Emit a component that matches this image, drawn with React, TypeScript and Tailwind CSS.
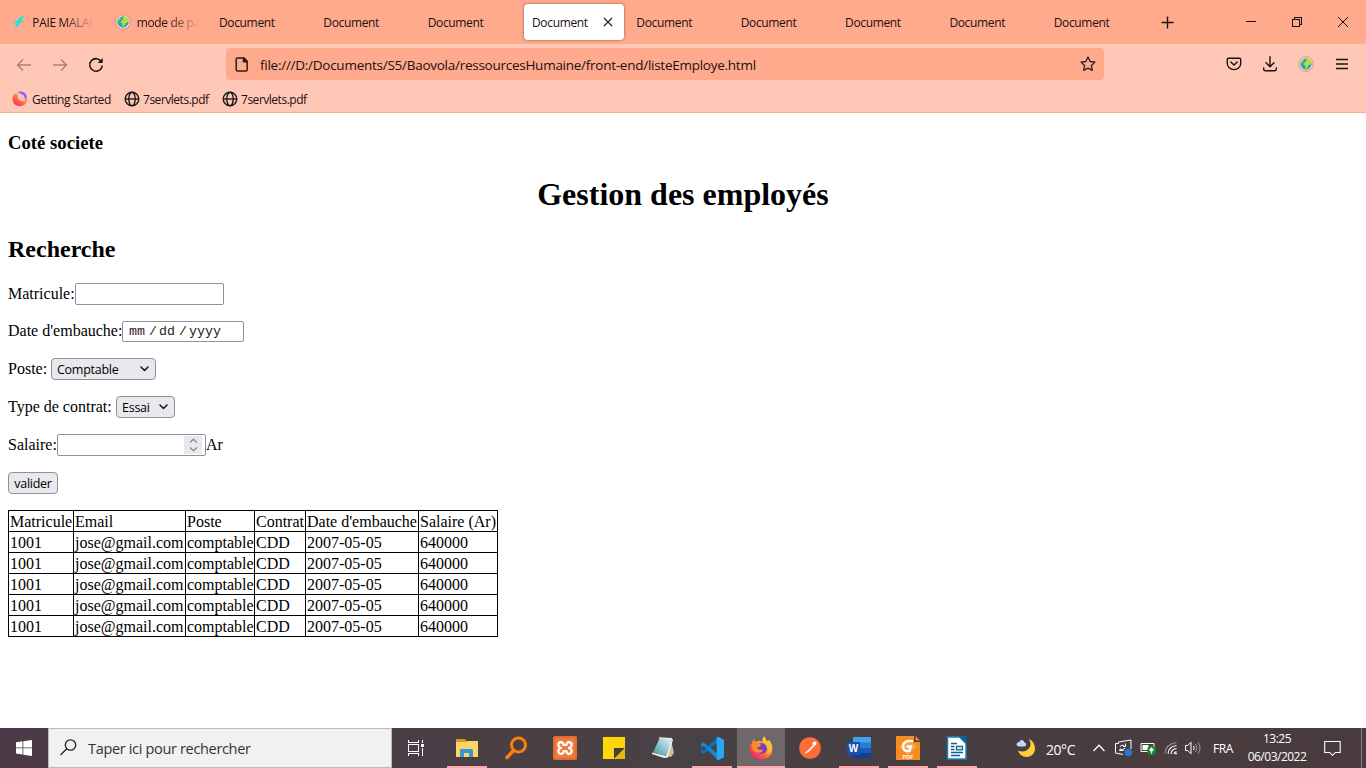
import type { ReactNode } from "react";

const Globe = ({ size = 16 }: { size?: number }) => (
  <svg width={size} height={size} viewBox="0 0 16 16" className="shrink-0">
    <circle cx="8" cy="8" r="7.2" fill="#e9f3ee" stroke="#ff7d59" strokeWidth="1" />
    <circle cx="8" cy="8" r="5.7" fill="#2ba8b8" />
    <path d="M8 3l2.500.2 2 1.600.7 2.600-1.500 1.500-1.700.3-.8 3-1.500.2-.4-2.800-1.500-1.400.6-1.600 1.700-.7z" fill="#c7d92d" />
    <path d="M3 6.500l1.600-2.700 1.600-.5-.8 2L4 7.500z" fill="#8fcf4a" />
  </svg>
);

const Bolt = () => (
  <svg width="16" height="16" viewBox="0 0 16 16" className="shrink-0">
    <path d="M15 .5L9 4.200 6.400 7.500 2 8.300l4.500 1.300L4.500 14.800l5-4.600 2-1.800 3.500-.6-3.800-.8z" fill="#20e3dc" />
  </svg>
);

const WebIcon = () => (
  <svg width="16" height="16" viewBox="0 0 16 16" fill="none" stroke="#1d1a1a" strokeWidth="1.4" className="shrink-0">
    <circle cx="8" cy="8" r="6.8" />
    <ellipse cx="8" cy="8" rx="3.2" ry="6.8" />
    <path d="M1.2 8h13.6" />
  </svg>
);

const FirefoxMark = () => (
  <svg width="16" height="16" viewBox="0 0 16 16" className="shrink-0">
    <defs>
      <linearGradient id="ffm" x1=".9" y1="0" x2=".1" y2="1">
        <stop offset="0" stopColor="#ffd02e" />
        <stop offset=".5" stopColor="#ff7a3c" />
        <stop offset="1" stopColor="#f5157a" />
      </linearGradient>
    </defs>
    <path d="M3 2.200C-.2 5-.1 10 2.200 12.700 5 16 10.500 15.900 13.300 13c2.100-2.200 2.200-4.500 1.600-6.500-1 2.600-3 3.800-5.400 3.500C6.500 9.500 5.800 7.500 6 5.500L5.500 3z" fill="url(#ffm)" />
    <path d="M5 1.300c4.500-2.200 9.600.5 9.900 5-.5 1.500-1.200 2.200-2 2.600C13.300 5.500 10.500 2.800 5 1.300z" fill="#9059ff" />
    <circle cx="9.500" cy="6.200" r="2.700" fill="#ffc0ae" />
  </svg>
);

const tabs: { text: string; icon?: ReactNode; active?: boolean }[] = [
  { text: "PAIE MALAG", icon: <Bolt /> },
  { text: "mode de pai", icon: <Globe /> },
  { text: "Document" },
  { text: "Document" },
  { text: "Document" },
  { text: "Document", active: true },
  { text: "Document" },
  { text: "Document" },
  { text: "Document" },
  { text: "Document" },
  { text: "Document" },
];

const Tab = ({ text, icon, active }: { text: string; icon?: ReactNode; active?: boolean }) => (
  <div className="flex h-11 w-[104.35px] shrink-0 items-center pr-[4.35px]">
    <div className={active ? "flex h-9 w-[100px] items-center rounded-[4px] bg-white pl-2 shadow-[0_0_3px_rgba(80,20,0,0.6)]" : "flex h-9 w-[100px] items-center overflow-hidden pl-2"}>
      {icon}
      {icon ? (
        <span className="mt-0.5 ml-1.5 w-[62px] overflow-hidden whitespace-nowrap [mask-image:linear-gradient(to_right,black_50%,transparent)]">{text}</span>
      ) : (
        <span className="mt-0.5">{text}</span>
      )}
      {active && (
        <svg width="10" height="10" viewBox="0 0 10 10" stroke="#222" strokeWidth="1.1" className="ml-[15px]">
          <path d="M1 1l8 8M9 1L1 9" />
        </svg>
      )}
    </div>
  </div>
);

const Browser = () => (
  <header className="h-[113px] border-b border-[#ffaa8d] bg-[#ffc8b6] font-['Open_Sans','Noto_Sans',sans-serif] text-[12px] tracking-[-0.35px] text-[#1b1013]">
    <div className="flex h-11 bg-[#ffaa8d] pl-[2.300px]">
      {tabs.map((t, i) => <Tab key={i} {...t} />)}
      <svg width="13" height="13" viewBox="0 0 13 13" stroke="#1b1013" strokeWidth="1.4" className="mt-4 ml-[11px] shrink-0">
        <path d="M6.500 .5v12M.5 6.500h12" />
      </svg>
      <div className="ml-auto flex items-center">
        <svg width="10" height="10" viewBox="0 0 10 10" stroke="#111" fill="none" shapeRendering="crispEdges"><path d="M0 4.500h10" /></svg>
        <svg width="10" height="10" viewBox="0 0 10 10" stroke="#111" fill="none" className="ml-9" shapeRendering="crispEdges">
          <path d="M.5 2.500h7v7h-7zM2.500 2.500v-2h7v7h-2" />
        </svg>
        <svg width="10" height="10" viewBox="0 0 10 10" stroke="#111" fill="none" className="mr-[18px] ml-9"><path d="M0 0l10 10M10 0L0 10" /></svg>
      </div>
    </div>
    <div className="flex h-[42px] items-center">
      <svg width="16" height="16" viewBox="0 0 16 16" fill="none" stroke="#a98176" strokeWidth="1.300" className="ml-4"><path d="M15 8H1.500M7 2.500L1.500 8 7 13.500" /></svg>
      <svg width="16" height="16" viewBox="0 0 16 16" fill="none" stroke="#a98176" strokeWidth="1.300" className="ml-5"><path d="M1 8h13.500M9 2.500L14.500 8 9 13.500" /></svg>
      <svg width="16" height="16" viewBox="0 0 16 16" fill="none" stroke="#1b1013" strokeWidth="1.500" className="ml-5"><path d="M13.600 5A6.300 6.300 0 1 0 14.300 8.500" /><path d="M14.700 1v5h-5z" fill="#1b1013" stroke="none" /></svg>
      <div className="ml-[122px] flex h-8 w-[878px] items-center rounded-[4px] bg-[#ffaa8d] -mt-0.5">
        <svg width="14" height="15" viewBox="0 0 14 15" fill="none" stroke="#2b1d1a" strokeWidth="1.500" strokeLinejoin="round" className="ml-[9px]">
          <path d="M2.500 1h6.500l3.200 3.300v8.400q0 1.300-1.300 1.300H2.500q-1.300 0-1.300-1.300V2.300Q1.200 1 2.500 1z" /><path d="M8.500 1v3.800h3.600z" fill="#2b1d1a" />
        </svg>
        <span className="mt-0.5 ml-[11px] w-[497px] text-[13.500px] tracking-[-0.26px] whitespace-nowrap">file:///D:/Documents/S5/Baovola/ressourcesHumaine/front-end/listeEmploye.html</span>
        <svg width="16" height="16" viewBox="0 0 16 16" fill="none" stroke="#2b1d1a" strokeWidth="1.300" strokeLinejoin="round" className="mr-2 ml-auto">
          <path d="M8 1l2.100 4.500 4.900.6-3.600 3.400.9 4.900L8 12.100l-4.300 2.300.9-4.900L1 6.100l4.900-.6z" />
        </svg>
      </div>
      <svg width="16" height="16" viewBox="0 0 16 16" fill="none" stroke="#1b1013" strokeWidth="1.400" strokeLinecap="round" strokeLinejoin="round" className="ml-[122px] -mt-0.5">
        <path d="M2.500 2.200h11q1.200 0 1.200 1.200v4A6.700 6.200 0 0 1 1.300 7.400v-4q0-1.200 1.200-1.200zM4.800 6L8 9l3.200-3" />
      </svg>
      <svg width="16" height="16" viewBox="0 0 16 16" fill="none" stroke="#1b1013" strokeWidth="1.400" strokeLinecap="round" strokeLinejoin="round" className="ml-5 -mt-0.5">
        <path d="M8 .8v9.700M4 6.800l4 3.900 4-3.900M1.700 12v1.300q0 1.400 1.400 1.400h9.800q1.400 0 1.400-1.400V12" />
      </svg>
      <span className="ml-5 -mt-0.5"><Globe /></span>
      <svg width="12" height="12" viewBox="0 0 12 12" stroke="#1b1013" strokeWidth="1.300" className="-mt-0.5 ml-[22px]"><path d="M0 1.500h12M0 6h12M0 10.500h12" /></svg>
    </div>
    <div className="flex h-[26px] items-center whitespace-nowrap">
      <span className="-mt-px ml-3"><FirefoxMark /></span>
      <span className="mt-px ml-1 w-[88px] tracking-[-0.4px]">Getting Started</span>
      <span className="ml-1"><WebIcon /></span>
      <span className="mt-px ml-[3px] w-[75px] tracking-[-0.48px]">7servlets.pdf</span>
      <span className="ml-1"><WebIcon /></span>
      <span className="mt-px ml-[3px] tracking-[-0.48px]">7servlets.pdf</span>
    </div>
  </header>
);

const Chevron = () => (
  <svg width="9" height="6" viewBox="0 0 9 6" fill="none" stroke="#15141a" strokeWidth="1.500" strokeLinecap="round" strokeLinejoin="round"><path d="M1 1l3.500 3.500L8 1" /></svg>
);

const boxText = "font-['Open_Sans','Noto_Sans',sans-serif] text-[12.500px] tracking-[-0.26px]";

const Row = ({ label, labelClass, children }: { label: string; labelClass: string; children: ReactNode }) => (
  <div className="mb-4 flex h-[22px] items-center whitespace-nowrap">
    <label className={labelClass}>{label}</label>
    {children}
  </div>
);

const head = ["Matricule", "Email", "Poste", "Contrat", "Date d'embauche", "Salaire (Ar)"];
const row = ["1001", "jose@gmail.com", "comptable", "CDD", "2007-05-05", "640000"];

const Page = () => (
  <main className="h-[615px] overflow-hidden bg-white px-2 font-['Liberation_Serif',serif] text-[16px] leading-[18px] text-black">
    <h3 className="mt-[19px] h-[21px] text-[18.720px] leading-[21px] font-bold">Coté societe</h3>
    <h1 className="mt-[23px] h-9 text-center text-[32px] leading-9 font-bold">Gestion des employés</h1>
    <h2 className="mt-[23px] h-7 text-[24px] leading-7 font-bold">Recherche</h2>
    <div className="mt-5">
      <Row label="Matricule:" labelClass="w-[67px]">
        <div className="h-[22px] w-[149px] rounded-[2px] border border-[#8f8f9d]" />
      </Row>
      <div className="-mb-px">
        <Row label="Date d'embauche:" labelClass="w-[114px] -mt-0.5">
          <div className="-mt-px flex h-[21px] w-[122px] items-center rounded-[2px] border border-[#8f8f9d] pl-1.5 font-['Liberation_Mono',monospace] text-[13.300px] text-[#222]">
            <span className="w-[20px]">mm</span><span className="w-[10px]">/</span><span className="w-[20px]">dd</span><span className="w-[10px]">/</span><span>yyyy</span>
          </div>
        </Row>
      </div>
      <Row label="Poste:" labelClass="w-[43px]">
        <div className={`flex h-[22px] w-[105px] items-center justify-between rounded-[4px] border border-[#8f8f9d] bg-[#e9e9ed] pr-1.5 pl-[5px] ${boxText}`}><span className="mt-0.5">Comptable</span><Chevron /></div>
      </Row>
      <Row label="Type de contrat:" labelClass="w-[108px]">
        <div className={`flex h-[22px] w-[59px] items-center justify-between rounded-[4px] border border-[#8f8f9d] bg-[#e9e9ed] pr-1.5 pl-[5px] ${boxText}`}><span className="mt-0.5">Essai</span><Chevron /></div>
      </Row>
      <Row label="Salaire:" labelClass="w-[49px]">
        <div className="flex h-[22px] w-[149px] items-center justify-end rounded-[2px] border border-[#8f8f9d] pr-[3px]">
          <div className="flex h-[18px] w-[18px] items-center justify-center bg-[#e9e9ed]">
            <svg width="9" height="14" viewBox="0 0 9 14" fill="none" stroke="#8f8f9d" strokeWidth="1.500"><path d="M1 4.500L4.500 1.300 8 4.500M1 9.500l3.500 3.200L8 9.500" /></svg>
          </div>
        </div>
        <span>Ar</span>
      </Row>
      <div className={`mb-4 flex h-[22px] w-[50px] items-center justify-center rounded-[4px] border border-[#8f8f9d] bg-[#e9e9ed] ${boxText}`}><span className="mt-0.5">valider</span></div>
    </div>
    <table className="w-[490px] table-fixed border-collapse">
      <colgroup>
        <col className="w-[65px]" /><col className="w-[112px]" /><col className="w-[69px]" /><col className="w-[51px]" /><col className="w-[113px]" /><col className="w-[79px]" />
      </colgroup>
      <tbody>
        {[head, row, row, row, row, row].map((cells, r) => (
          <tr key={r} className="h-[21px]">
            {cells.map((c) => <td key={c} className="border border-black px-px pt-[2px] pb-0 whitespace-nowrap">{c}</td>)}
          </tr>
        ))}
      </tbody>
    </table>
  </main>
);

const Explorer = () => (
  <svg width="24" height="24" viewBox="0 0 24 24">
    <path d="M1 3h9l1.500 2H22v3H1z" fill="#d89b16" /><path d="M1 6h10l1-1h11v16H1z" fill="#fbd667" />
    <path d="M5 21v-7q0-1 1-1h11q1 0 1 1v7h-4v-4h-5v4z" fill="#3a95dd" />
  </svg>
);
const Everything = () => (
  <svg width="24" height="24" viewBox="0 0 24 24" fill="none" stroke="#ff7f0e" strokeLinecap="round">
    <circle cx="14.500" cy="9" r="7" strokeWidth="3" /><path d="M9.500 14.500L3 21.500" strokeWidth="3.500" />
  </svg>
);
const Xampp = () => (
  <svg width="24" height="24" viewBox="0 0 24 24">
    <rect width="24" height="24" rx="2" fill="#ef7c3e" /><rect x="1" y="1" width="22" height="22" rx="1.500" fill="none" stroke="#d35d25" />
    <path d="M8 6.200q-3.200 0-2.600 3Q5.800 11 8 12q-3 1-2.600 3.200.2 2.800 2.800 2.600 2.300-.2 2.300-2.600h3q0 2.400 2.300 2.600 2.600.2 2.800-2.600Q19 13 16 12q2.200-1 2.600-2.800.6-3-2.600-3-2.200.1-2.400 2.600h-3.200Q10.200 6.300 8 6.200z" fill="none" stroke="#fff" strokeWidth="2.200" strokeLinejoin="round" />
  </svg>
);
const Sticky = () => (
  <svg width="24" height="24" viewBox="0 0 24 24"><path d="M1 1h22v22H1z" fill="#ffd60a" /><path d="M12 23V12h11z" fill="#463c3c" /><path d="M23 12v11H12z" fill="#e9b80c" /></svg>
);
const Notepad = () => (
  <svg width="24" height="24" viewBox="0 0 24 24">
    <defs><linearGradient id="np" x1="0" y1="1" x2="1" y2="0"><stop stopColor="#3e95a4" /><stop offset="1" stopColor="#dff5fa" /></linearGradient></defs>
    <path d="M20 4l3 13-3 4-5-1z" fill="#cbbf92" /><path d="M8.500 2.500L21 3l-4 17-15-3.500z" fill="url(#np)" /><path d="M1 16.500L15.500 20 21 3l1 .5-5 18-4 .5L1 18z" fill="#eef2f3" /><path d="M8 2l13 .8" stroke="#e2e7e9" strokeWidth="1.500" />
  </svg>
);
const VsCode = () => (
  <svg width="25" height="25" viewBox="0 0 24 24">
    <path d="M17 1L3.500 14 1 12.500V16l2.500 1L18 5.500z" fill="#0a73bc" /><path d="M17 23L3.500 9.500 1 11V7.500l2.500-1.500L18 18z" fill="#1586d1" /><path d="M17 .5l6 3v17l-6 3-1-1.500V2z" fill="#29a8f3" />
  </svg>
);
const Firefox = () => (
  <svg width="24" height="24" viewBox="0 0 24 24">
    <defs><linearGradient id="ff" x1="1" y1="0" x2=".2" y2="1"><stop stopColor="#fff44f" /><stop offset=".4" stopColor="#ffb02e" /><stop offset=".7" stopColor="#ff5b36" /><stop offset="1" stopColor="#ed1d83" /></linearGradient></defs>
    <path d="M3 6.500L4.500 3l2 2.700Q8.500 4.700 11 5l2.500 1Q12.500 3 15.500 0q.5 3.500 3 5.500L20 4q3.800 4.200 3.400 9.500Q22.500 23 12 23.500 2 23 .8 13.500.4 9.500 3 6.500z" fill="url(#ff)" />
    <circle cx="12.500" cy="12.500" r="5.400" fill="#7540c8" /><path d="M3 8q5-3 9 .7l-1 2H9.500q-2 1-1 2.300 3 1 5.500.5 0 3-4 3.200Q2.500 17 3 8z" fill="#ff8a2a" /><path d="M15 6q3 1.500 3.200 4Q21 14 17 18q4.500-1 5-5Q23 8 17 4z" fill="#ffbd31" />
  </svg>
);
const Postman = () => (
  <svg width="24" height="24" viewBox="0 0 24 24"><circle cx="12" cy="12" r="10.800" fill="#ff6c37" /><path d="M6.500 17.800l1.500-2 7-7 1.500 1.300-6.500 6.400z" fill="#fff" /><circle cx="16.500" cy="7.500" r="2" fill="#fff" /><path d="M8.500 15.500l6-6" stroke="#ff6c37" strokeWidth=".6" /></svg>
);
const Word = () => (
  <svg width="25" height="24" viewBox="0 0 25 24">
    <path d="M6 1h18v6H6z" fill="#41a5ee" /><path d="M6 6.500h18v5.500H6z" fill="#2b7cd3" /><path d="M6 12h18v5.500H6z" fill="#185abd" /><path d="M6 17h18v5.500H6z" fill="#103f91" /><rect y="6" width="13" height="13" rx="1" fill="#1851ad" />
    <text x="6.500" y="16" textAnchor="middle" fontFamily="Liberation Sans, sans-serif" fontSize="10" fontWeight="700" fill="#fff">W</text>
  </svg>
);
const Foxit = () => (
  <svg width="24" height="24" viewBox="0 0 24 24">
    <path d="M0 0h18v6h6v18H0z" fill="#f68b1f" /><path d="M19.500 0L24 4.500h-4.500z" fill="#f68b1f" /><path d="M12 3l9 8-9 8-9-8z" fill="#f9a34d" />
    <path d="M17 5.200q-9-1.500-10 4.800 0 6 6.500 4.800l1.500-4.300h-4.500" fill="none" stroke="#fff" strokeWidth="2.300" />
    <text x="12" y="22.500" textAnchor="middle" fontFamily="Liberation Sans, sans-serif" fontSize="5.500" fontWeight="700" fill="#fff">PDF</text>
  </svg>
);
const Writer = () => (
  <svg width="24" height="24" viewBox="0 0 24 24">
    <path d="M2.500 1h12L21 7.500V23H2.500z" fill="#fff" stroke="#1385bd" strokeWidth="1.500" /><path d="M14 0h7.500v7z" fill="#0d628e" />
    <path d="M6 7.500h6M6 10.500h3.500M6 13.500h3.500M6 16.500h12M6 19.500h9" stroke="#0d628e" strokeWidth="1.400" /><rect x="11.500" y="10.300" width="6" height="3.600" fill="#bfe3f5" stroke="#0d628e" strokeWidth="1.200" />
  </svg>
);

const apps: { icon: ReactNode; open?: boolean; active?: boolean }[] = [
  { icon: <Explorer />, open: true }, { icon: <Everything /> }, { icon: <Xampp /> }, { icon: <Sticky /> }, { icon: <Notepad /> },
  { icon: <VsCode />, open: true }, { icon: <Firefox />, open: true, active: true }, { icon: <Postman /> },
  { icon: <Word />, open: true }, { icon: <Foxit />, open: true }, { icon: <Writer />, open: true },
];

const Taskbar = () => (
  <footer className="flex h-10 bg-gradient-to-r from-[#4b3a45] via-[#484145] to-[#483a3d] font-['Open_Sans','Noto_Sans',sans-serif] text-white">
    <div className="flex w-12 items-center justify-center">
      <svg width="16" height="16" viewBox="0 0 16 16" fill="#fff"><path d="M0 2.200L6.500 1.300V7.500H0zM7.300 1.200L16 0v7.500H7.300zM0 8.300h6.500v6.200L0 13.600zM7.300 8.300H16V16l-8.700-1.200z" /></svg>
    </div>
    <div className="flex w-[344px] items-center border border-[#bcbcbc] bg-[#f1f1f1]">
      <svg width="17" height="17" viewBox="0 0 17 17" fill="none" stroke="#222" strokeWidth="1.300" className="-mt-0.5 ml-[11px]"><circle cx="10.500" cy="6" r="5.200" /><path d="M6.800 9.700L.5 16" /></svg>
      <span className="mt-0.5 ml-[11px] text-[14.500px] tracking-[-0.33px] text-[#333]">Taper ici pour rechercher</span>
    </div>
    <div className="flex w-[51px] items-center pl-4">
      <svg width="16" height="16" viewBox="0 0 16 16" fill="none" stroke="#fff" shapeRendering="crispEdges"><path d="M.5 0v2.500h10V0M.5 4.500h10v7H.5zM.5 16v-2.500h10V16M14.500 0v3M14.500 8v8" /><path d="M13 4h3v3h-3z" fill="#fff" stroke="none" /></svg>
    </div>
    {apps.map((a, i) => (
      <div key={i} className="flex w-[49px] justify-center pr-px">
        <div className={a.active ? "flex h-10 w-12 shrink-0 flex-col items-center bg-[#6e686b]" : "flex h-10 w-12 shrink-0 flex-col items-center"}>
          <div className="flex h-[38px] items-center pt-0.5">{a.icon}</div>
          {a.open && <div className={a.active ? "h-0.5 w-12 bg-[#ffa7af]" : "h-0.5 w-10 bg-[#ffa7af]"} />}
        </div>
      </div>
    ))}
    <div className="ml-[34px] flex items-center">
      <svg width="20" height="20" viewBox="0 0 20 20"><path d="M13 1q4 8-2.500 11.500Q6.500 14.500 2 12.500 4 19 10.500 19q7-.5 8.500-7Q19.500 4 13 1z" fill="#ffcd35" /><path d="M3 8.500Q-.2 8 .8 5.500 1.500 4 3.200 4.200 4 1.500 6.500 2.200 8.200 2.500 8.500 4.500q2.200.5 1.500 2.500-.5 1.500-2 1.500z" fill="#b8dcf6" /></svg>
      <span className="mt-0.5 ml-2.5 w-[36px] text-[14px] tracking-[-0.45px]">20°C</span>
      <svg width="12" height="8" viewBox="0 0 12 8" fill="none" stroke="#fff" strokeWidth="1.300" className="ml-[11px]"><path d="M.5 7L6 1.300 11.500 7" /></svg>
      <svg width="18" height="18" viewBox="0 0 18 18" fill="none" stroke="#fff" className="ml-2.5"><path d="M8 15.500L.5 14V4.500h3M3.500 4.500V3L16 1v9" /><path d="M4.500 11.500h4M5 7.500q2-3 5 0M10.500 4.500v3H8M10 9q-2 3-5 1V12" /><circle cx="13.500" cy="13.500" r="3.800" fill="#2878d0" stroke="none" /></svg>
      <svg width="16" height="16" viewBox="0 0 16 16" fill="none" stroke="#fff" className="ml-[7px]"><path d="M1 3.500h13v8H1z" /><path d="M2.500 5h6v5h-6z" fill="#fff" stroke="none" /><circle cx="11.500" cy="10.500" r="4.500" fill="#168e2c" stroke="none" /><path d="M11.500 7.500L9.500 10l2 1.800 2-1.800zM11.500 9.500V14" fill="#fff" strokeWidth=".7" /></svg>
      <svg width="14" height="14" viewBox="0 0 14 14" fill="none" stroke="#fff" strokeWidth="1.100" className="ml-2"><path d="M4 13Q4.500 5.500 12.500 4.500M7 13q.5-5 5.500-5.500M9.800 13q.4-2.200 2.700-2.500" /><path d="M1 12.500Q1.500 3 12.500 1.500" stroke="#9b9294" /><circle cx="12" cy="12.500" r="1" fill="#fff" stroke="none" /></svg>
      <svg width="17" height="14" viewBox="0 0 17 14" fill="none" stroke="#fff" className="ml-[7px]"><path d="M.5 4.500h2.300L6 1.200v11.600L2.800 9.500H.5zM8.500 5q1.500 2 0 4" /><path d="M10.500 3q3 4 0 8M13 1.500q4 5.500 0 11" stroke="#a69e9f" /></svg>
      <span className="mt-px ml-[11px] w-[22px] text-[12px] tracking-[-0.4px]">FRA</span>
      <div className="ml-3 flex w-[60px] flex-col items-center text-[12px] leading-[18px] tracking-[-0.5px] whitespace-nowrap"><span>13:25</span><span>06/03/2022</span></div>
      <svg width="17" height="17" viewBox="0 0 17 17" fill="none" stroke="#fff" strokeWidth="1.100" className="ml-[17px]"><path d="M.7 1.500h15.500v11h-5L8.500 15.500l-2.700-3H.7z" /></svg>
    </div>
    <div className="mr-1 ml-auto w-px bg-[#8b8285]" />
  </footer>
);

export default function App() {
  return (
    <div className="flex h-[768px] w-[1366px] flex-col overflow-hidden bg-white">
      <Browser />
      <Page />
      <Taskbar />
    </div>
  );
}
